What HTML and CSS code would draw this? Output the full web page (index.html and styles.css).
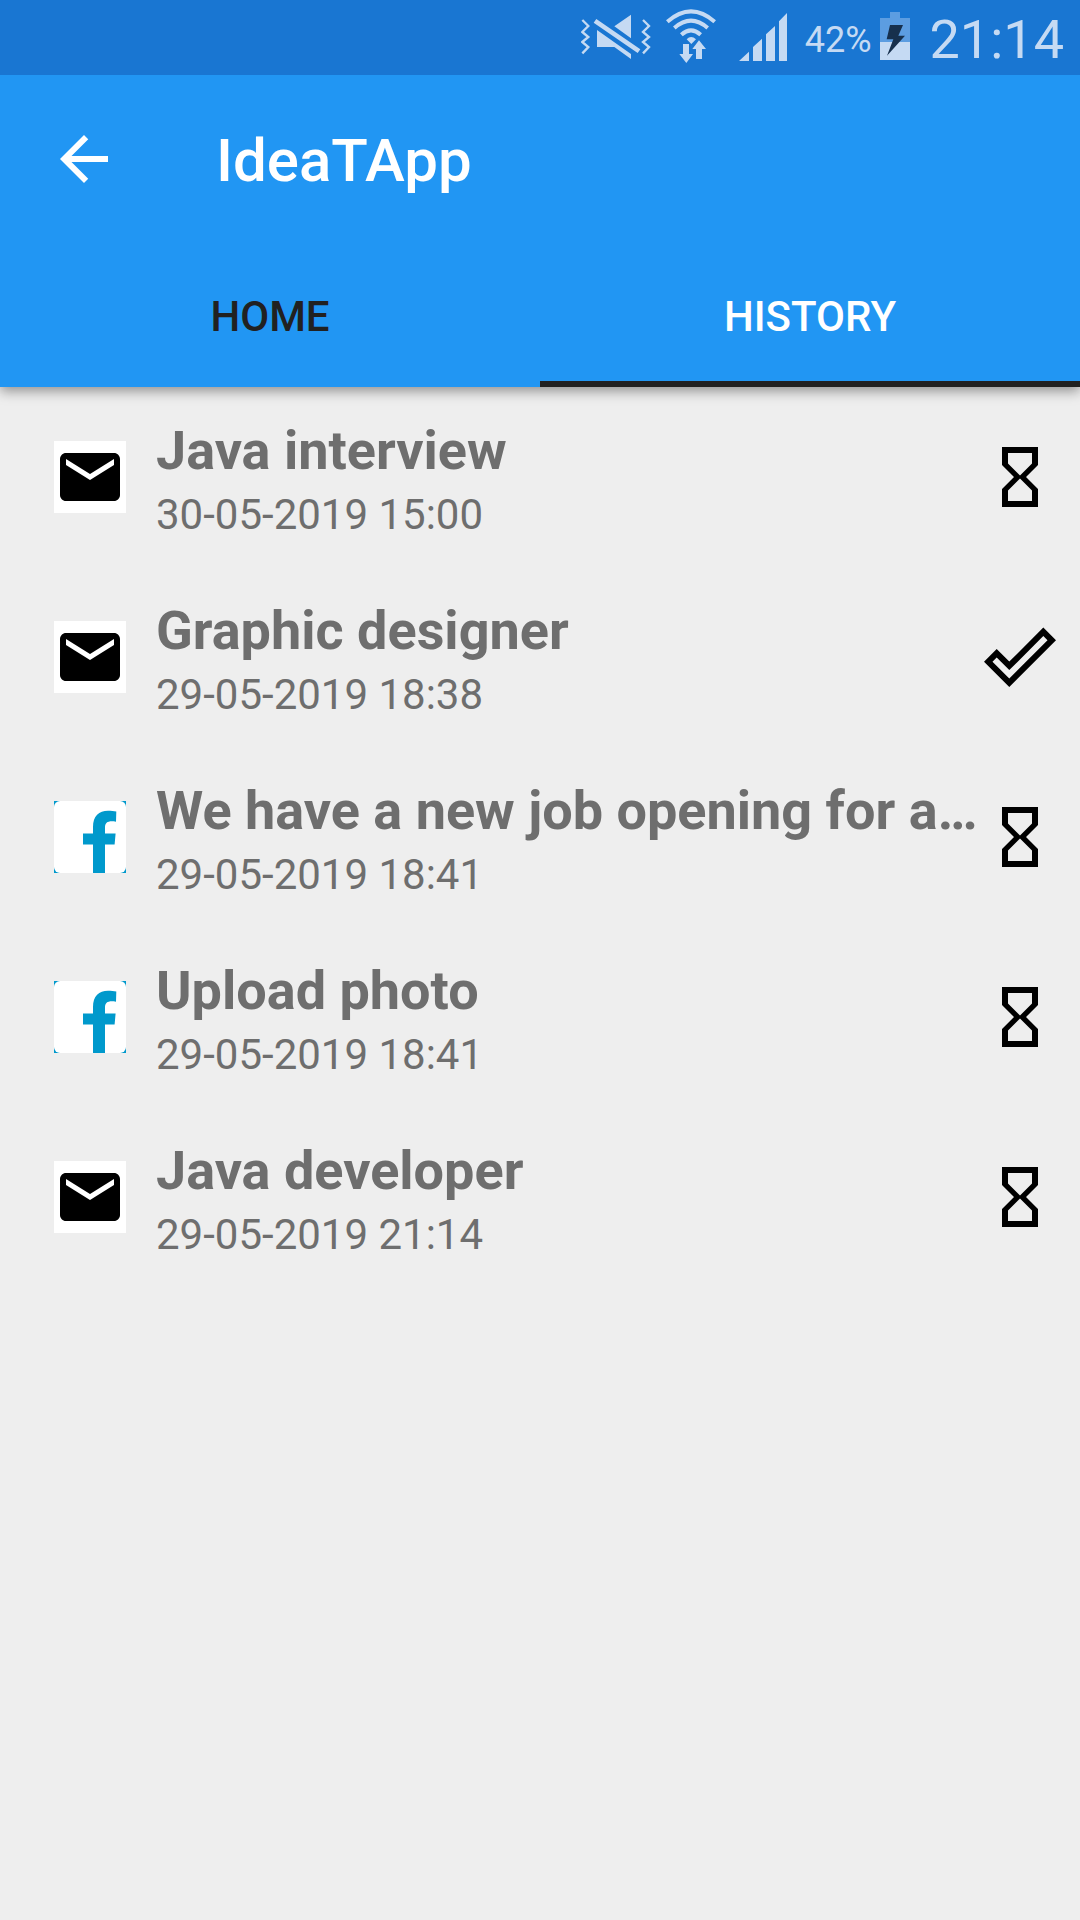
FILE: index.html
```html
<!DOCTYPE html>
<html lang="en">
<head>
<meta charset="utf-8">
<meta name="viewport" content="width=device-width, initial-scale=1">
<title>IdeaTApp</title>
<link rel="stylesheet" href="styles.css">
</head>
<body>
<svg class="sprite" aria-hidden="true">
  <symbol id="mail" viewBox="0 0 24 24"><path d="M20 4H4c-1.100 0-1.990.9-1.990 2L2 18c0 1.100.9 2 2 2h16c1.100 0 2-.9 2-2V6c0-1.100-.9-2-2-2zm0 4l-8 5-8-5V6l8 5 8-5v2z"/></symbol>
  <symbol id="facebook" viewBox="0 0 72 72">
    <path fill="#0099cc" d="M0 0h72v72H0z"/>
    <rect width="72" height="72" rx="6" fill="#fff"/>
    <path fill="#0099cc" d="M39 72V43.500H29V32.500H39V26C39 15 45 9.700 54 9.700c3 0 6 .2 8.300.8l-.3 10.200C54 19.500 51 21.500 51 26.500v6h10.600l-1 11H51V72z"/>
  </symbol>
  <symbol id="hourglass" viewBox="0 0 24 24"><path d="M6 2v6h.01L6 8.010 10 12l-4 4 .01.01H6V22h12v-5.990h-.01L18 16l-4-4 4-3.990-.01-.01H18V2H6zm10 14.500V20H8v-3.500l4-4 4 4zm-4-5l-4-4V4h8v3.500l-4 4z"/></symbol>
  <symbol id="done" viewBox="0 0 24 24"><path d="M19.770 5.030l1.400 1.400L8.430 19.170l-5.600-5.600 1.400-1.400 4.200 4.200L19.770 5.030m0-2.830L8.430 13.540l-4.200-4.200L0 13.570 8.430 22 24 6.430 19.770 2.200z"/></symbol>
</svg>

<div class="status-bar">
  <svg class="mute" viewBox="36 0 210 225" role="img" aria-label="Sound off, vibrate">
    <path d="M84 90l102 72v15l-50-36H84zM136 79l50-35v71zM82 57l132 91-8 11L74 68z"/>
    <path class="wave" d="M40 60l18 18-18 18 18 15-18 15 18 15-18 19M222 60l18 18-18 18 18 15-18 15 18 15-18 19"/>
  </svg>
  <svg class="wifi" viewBox="291 0 150 225" role="img" aria-label="Wi-Fi">
    <path class="arc" d="M295 65q71-62 142 0M316 84q50-44 100 0M337 104q29-26 58 0"/>
    <path d="M353 118q13-14 28 0l-14 14zM342 132h18v30h12l-20 27-21-27h11zM381 177v-30h-11l20-26 21 26h-12v30z"/>
  </svg>
  <svg class="signal" viewBox="510 0 144 225" role="img" aria-label="Signal strength">
    <path d="M510 183l30-28v28zM552 183v-42l27-25v67zM591 183v-80l27-25v105zM630 183V64l24-25v144z"/>
  </svg>
  <span class="charge">42%</span>
  <svg class="battery" viewBox="273 0 90 225" role="img" aria-label="Charging">
    <path class="empty" d="M303 36h30v18h30v72h-90V54h30z"/>
    <path d="M273 126h90v54h-90z"/>
    <path class="bolt" d="M303 75h39l-14 32h20l-54 60 19-49h-20z"/>
  </svg>
  <time class="clock">21:14</time>
</div>

<header class="app-bar">
  <div class="toolbar">
    <button class="back" type="button" aria-label="Back">
      <svg class="icon" viewBox="0 0 24 24"><path d="M20 11H7.830l5.590-5.590L12 4l-8 8 8 8 1.410-1.410L7.830 13H20v-2z"/></svg>
    </button>
    <h1 class="title">IdeaTApp</h1>
  </div>
  <div class="tabs" role="tablist">
    <button class="tab" type="button" role="tab" aria-selected="false">HOME</button>
    <button class="tab" type="button" role="tab" aria-selected="true">HISTORY</button>
  </div>
</header>

<main>
  <ul class="history">
    <li class="entry">
      <svg class="icon source"><use href="#mail"/></svg>
      <div class="details"><h2 class="name">Java interview</h2><time class="date">30-05-2019 15:00</time></div>
      <svg class="icon" role="img" aria-label="Pending"><use href="#hourglass"/></svg>
    </li>
    <li class="entry">
      <svg class="icon source"><use href="#mail"/></svg>
      <div class="details"><h2 class="name">Graphic designer</h2><time class="date">29-05-2019 18:38</time></div>
      <svg class="icon" role="img" aria-label="Done"><use href="#done"/></svg>
    </li>
    <li class="entry">
      <svg class="icon"><use href="#facebook"/></svg>
      <div class="details"><h2 class="name">We have a new job opening for a…</h2><time class="date">29-05-2019 18:41</time></div>
      <svg class="icon" role="img" aria-label="Pending"><use href="#hourglass"/></svg>
    </li>
    <li class="entry">
      <svg class="icon"><use href="#facebook"/></svg>
      <div class="details"><h2 class="name">Upload photo</h2><time class="date">29-05-2019 18:41</time></div>
      <svg class="icon" role="img" aria-label="Pending"><use href="#hourglass"/></svg>
    </li>
    <li class="entry">
      <svg class="icon source"><use href="#mail"/></svg>
      <div class="details"><h2 class="name">Java developer</h2><time class="date">29-05-2019 21:14</time></div>
      <svg class="icon" role="img" aria-label="Pending"><use href="#hourglass"/></svg>
    </li>
  </ul>
</main>
</body>
</html>
```
FILE: styles.css
```css
* { box-sizing: border-box; }

body {
  margin: 0;
  min-height: 100vh;
  background: #eeeeee;
  color: #6e6e6e;
  font-family: Roboto, "Noto Sans", sans-serif;
}

h1, h2, ul { margin: 0; padding: 0; }

button {
  padding: 0;
  border: 0;
  background: none;
  color: inherit;
  font: inherit;
  cursor: pointer;
}

.sprite { display: none; }

.icon {
  display: block;
  flex: none;
  width: 72px;
  height: 72px;
  fill: #000;
}

.source { background: #fff; }

/* Status bar, kept above the app bar's shadow */
.status-bar {
  position: relative;
  z-index: 2;
  display: flex;
  justify-content: flex-end;
  align-items: center;
  height: 75px;
  padding-right: 16px;
  background: #1976d2;
  color: #c5daf3;
  fill: #c5daf3;
}

.status-bar svg { height: 75px; }
.mute { width: 70px; margin-right: 15px; }
.wifi { width: 50px; margin-right: 23px; }
.signal { width: 48px; margin-right: 18px; }
.battery { width: 30px; margin: 0 20px 0 8px; }

.wave, .arc { fill: none; stroke: #c5daf3; }
.wave { stroke-width: 7; }
.arc { stroke-width: 12; }
.empty { fill: #5c9de1; }
.bolt { fill: #17304d; }

.charge, .clock { padding-top: 4px; }
.charge { font-size: 36px; line-height: 48px; }
.clock { font-size: 54px; line-height: 70px; }

/* App bar */
.app-bar {
  position: relative;
  z-index: 1;
  background: #2196f3;
  color: #fff;
  box-shadow: 0 4px 12px rgba(0, 0, 0, 0.4);
}

.toolbar {
  display: flex;
  align-items: center;
  gap: 96px;
  height: 168px;
  padding: 0 48px;
}

.back .icon { fill: #fff; }

.title {
  padding-top: 4px;
  font-size: 60px;
  font-weight: 500;
  line-height: 72px;
}

.tabs { display: flex; }

.tab {
  flex: 1;
  height: 144px;
  padding-top: 8px;
  border-bottom: 6px solid transparent;
  color: #212121;
  font-size: 42px;
  font-weight: 500;
}

.tab[aria-selected="true"] {
  border-bottom-color: #212121;
  color: #fff;
}

/* History list */
.history { list-style: none; }

.entry {
  display: flex;
  align-items: center;
  height: 180px;
  padding: 0 24px 0 54px;
}

.details {
  flex: 1;
  min-width: 0;
  padding: 0 6px 0 30px;
}

.name {
  overflow: hidden;
  font-size: 54px;
  font-weight: 700;
  line-height: 76px;
  text-overflow: ellipsis;
  white-space: nowrap;
}

.date {
  display: block;
  font-size: 42px;
  line-height: 52px;
}
```
